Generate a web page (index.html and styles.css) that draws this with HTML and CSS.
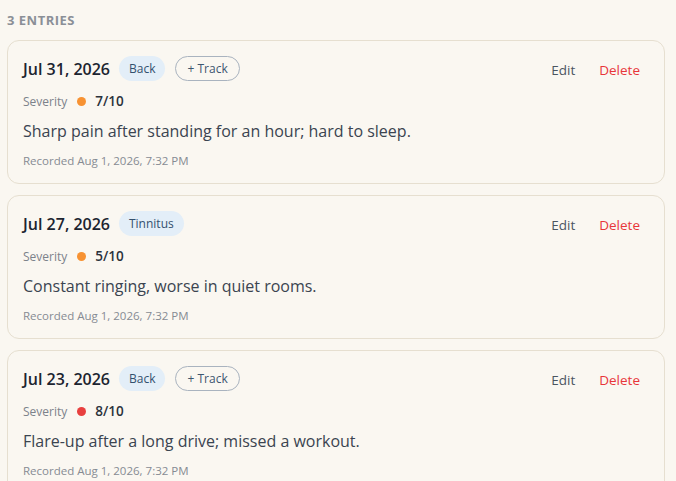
FILE: index.html
```html
<!DOCTYPE html>
<html lang="en">
<head>
<meta charset="utf-8">
<link rel="stylesheet" href="styles.css">
</head>
<body>
<main class="list">
  <h2 class="count">3 Entries</h2>

  <article class="card">
    <div class="card-head">
      <div class="title-row">
        <span class="date">Jul 31, 2026</span>
        <span class="tag">Back</span>
        <button class="track">+ Track</button>
      </div>
      <div class="actions">
        <button class="btn-edit">Edit</button>
        <button class="btn-delete">Delete</button>
      </div>
    </div>
    <div class="severity"><span class="sev-label">Severity</span><span class="dot dot-orange"></span><span class="sev-val">7/10</span></div>
    <p class="desc">Sharp pain after standing for an hour; hard to sleep.</p>
    <p class="recorded">Recorded Aug 1, 2026, 7:32 PM</p>
  </article>

  <article class="card">
    <div class="card-head">
      <div class="title-row">
        <span class="date">Jul 27, 2026</span>
        <span class="tag">Tinnitus</span>
      </div>
      <div class="actions">
        <button class="btn-edit">Edit</button>
        <button class="btn-delete">Delete</button>
      </div>
    </div>
    <div class="severity"><span class="sev-label">Severity</span><span class="dot dot-orange"></span><span class="sev-val">5/10</span></div>
    <p class="desc">Constant ringing, worse in quiet rooms.</p>
    <p class="recorded">Recorded Aug 1, 2026, 7:32 PM</p>
  </article>

  <article class="card">
    <div class="card-head">
      <div class="title-row">
        <span class="date">Jul 23, 2026</span>
        <span class="tag">Back</span>
        <button class="track">+ Track</button>
      </div>
      <div class="actions">
        <button class="btn-edit">Edit</button>
        <button class="btn-delete">Delete</button>
      </div>
    </div>
    <div class="severity"><span class="sev-label">Severity</span><span class="dot dot-red"></span><span class="sev-val">8/10</span></div>
    <p class="desc">Flare-up after a long drive; missed a workout.</p>
    <p class="recorded">Recorded Aug 1, 2026, 7:32 PM</p>
  </article>
</main>
</body>
</html>
```
FILE: styles.css
```css
html, body {
  margin: 0;
  padding: 0;
  background: #faf7f1;
  font-family: "Open Sans", "Noto Sans", sans-serif;
  color: #1f2733;
}

.list {
  padding: 11px 11px 0 7px;
  display: flex;
  flex-direction: column;
  gap: 11px;
}

.count {
  margin: 0;
  font-size: 13px;
  font-weight: 700;
  letter-spacing: 0.5px;
  text-transform: uppercase;
  color: #8a8f97;
  line-height: 18px;
}

.card {
  border: 1px solid #e6dfd0;
  border-radius: 12px;
  background: #faf7f1;
  padding: 15px 15px 15px 15px;
}

.card-head {
  display: flex;
  justify-content: space-between;
  align-items: center;
}

.title-row {
  display: flex;
  align-items: center;
  gap: 10px;
}

.date {
  font-size: 16px;
  font-weight: 600;
  color: #1c2430;
  margin-right: -1px;
}

.tag {
  background: #e3eef8;
  color: #33506e;
  font-size: 12px;
  line-height: 25px;
  padding: 0 10px;
  border-radius: 13px;
}

.track {
  font-family: inherit;
  font-size: 12px;
  line-height: 23px;
  padding: 0 11px;
  border: 1px solid #a9b3bf;
  border-radius: 13px;
  background: transparent;
  color: #3d5670;
}

.actions {
  display: flex;
  gap: 24px;
  padding-right: 9px;
  padding-top: 3px;
}

.actions button {
  font-family: inherit;
  font-size: 13.5px;
  background: none;
  border: 0;
  padding: 0;
}

.btn-edit { color: #4b5561; }
.btn-delete { color: #e8363a; }

.severity {
  display: flex;
  align-items: center;
  margin-top: 11px;
  font-size: 12px;
}

.sev-label { color: #7c828b; }

.dot {
  width: 9px;
  height: 9px;
  border-radius: 50%;
  margin: 0 9px 0 10px;
}
.dot-orange { background: #f79232; }
.dot-red { background: #e8403f; }

.sev-val {
  font-size: 13.5px;
  font-weight: 600;
  color: #2a313b;
}

.desc {
  margin: 10px 0 0 0;
  font-size: 16px;
  color: #3b4450;
}

.recorded {
  margin: 11px 0 0 0;
  font-size: 11.5px;
  color: #868b93;
}
```
